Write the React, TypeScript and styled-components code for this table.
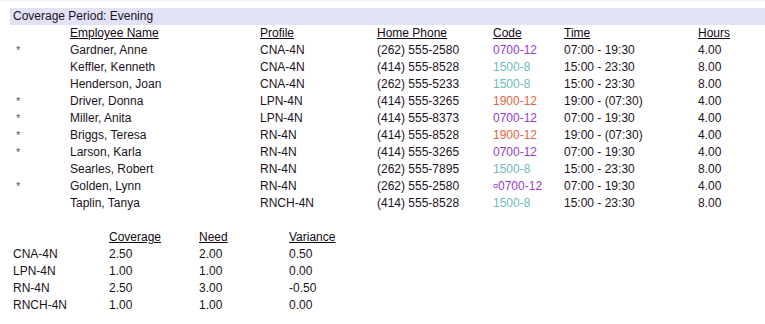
import styled, { createGlobalStyle } from 'styled-components'

const GlobalStyle = createGlobalStyle`
  html, body {
    margin: 0;
    padding: 0;
    background: #ffffff;
  }
  body {
    font-family: 'Liberation Sans', Arial, sans-serif;
    font-size: 12px;
    color: #1c121c;
  }
`

const TEXT_COLOR = '#1c121c'

const CODE_COLORS: Record<string, string> = {
  day: '#9a3ad0',
  evening: '#6bbcbc',
  night: '#e5653e',
}

type Shift = keyof typeof CODE_COLORS

interface Employee {
  starred: boolean
  name: string
  profile: string
  phone: string
  code: string
  shift: Shift
  marker?: boolean
  time: string
  hours: string
}

const employees: Employee[] = [
  { starred: true, name: 'Gardner, Anne', profile: 'CNA-4N', phone: '(262) 555-2580', code: '0700-12', shift: 'day', time: '07:00 - 19:30', hours: '4.00' },
  { starred: false, name: 'Keffler, Kenneth', profile: 'CNA-4N', phone: '(414) 555-8528', code: '1500-8', shift: 'evening', time: '15:00 - 23:30', hours: '8.00' },
  { starred: false, name: 'Henderson, Joan', profile: 'CNA-4N', phone: '(262) 555-5233', code: '1500-8', shift: 'evening', time: '15:00 - 23:30', hours: '8.00' },
  { starred: true, name: 'Driver, Donna', profile: 'LPN-4N', phone: '(414) 555-3265', code: '1900-12', shift: 'night', time: '19:00 - (07:30)', hours: '4.00' },
  { starred: true, name: 'Miller, Anita', profile: 'LPN-4N', phone: '(414) 555-8373', code: '0700-12', shift: 'day', time: '07:00 - 19:30', hours: '4.00' },
  { starred: true, name: 'Briggs, Teresa', profile: 'RN-4N', phone: '(414) 555-8528', code: '1900-12', shift: 'night', time: '19:00 - (07:30)', hours: '4.00' },
  { starred: true, name: 'Larson, Karla', profile: 'RN-4N', phone: '(414) 555-3265', code: '0700-12', shift: 'day', time: '07:00 - 19:30', hours: '4.00' },
  { starred: false, name: 'Searles, Robert', profile: 'RN-4N', phone: '(262) 555-7895', code: '1500-8', shift: 'evening', time: '15:00 - 23:30', hours: '8.00' },
  { starred: true, name: 'Golden, Lynn', profile: 'RN-4N', phone: '(262) 555-2580', code: '0700-12', shift: 'day', marker: true, time: '07:00 - 19:30', hours: '4.00' },
  { starred: false, name: 'Taplin, Tanya', profile: 'RNCH-4N', phone: '(414) 555-8528', code: '1500-8', shift: 'evening', time: '15:00 - 23:30', hours: '8.00' },
]

const summary = [
  { profile: 'CNA-4N', coverage: '2.50', need: '2.00', variance: '0.50' },
  { profile: 'LPN-4N', coverage: '1.00', need: '1.00', variance: '0.00' },
  { profile: 'RN-4N', coverage: '2.50', need: '3.00', variance: '-0.50' },
  { profile: 'RNCH-4N', coverage: '1.00', need: '1.00', variance: '0.00' },
]

const Page = styled.div`
  width: 765px;
  height: 324px;
  overflow: hidden;
  padding-top: 7px;
  box-sizing: border-box;
  border-top: 1px solid #efefef;
`

const PeriodBar = styled.div`
  margin-left: 10px;
  height: 17px;
  line-height: 17px;
  padding-left: 3px;
  background: #e2e2f6;
  color: ${TEXT_COLOR};
`

const ShiftRow = styled.div`
  display: grid;
  grid-template-columns: 54px 190px 117px 116px 71px 134px 1fr;
  padding-left: 16px;
  height: 17px;
  line-height: 17px;
  white-space: nowrap;
`

const SummaryTable = styled.div`
  margin-top: 17px;
`

const SummaryRow = styled.div`
  display: grid;
  grid-template-columns: 96px 90px 90px 1fr;
  padding-left: 13px;
  height: 17px;
  line-height: 17px;
  white-space: nowrap;
`

const Heading = styled.span`
  text-decoration: underline;
  color: #140814;
`

const Cell = styled.span`
  color: ${TEXT_COLOR};
`

const Star = styled.span`
  color: #555;
  font-size: 11px;
`

const Code = styled.span<{ $shift: Shift }>`
  color: ${({ $shift }) => CODE_COLORS[$shift]};
`

const Marker = styled.span`
  font-size: 9px;
  vertical-align: 1px;
`

const App = () => (
  <Page>
    <GlobalStyle />
    <PeriodBar>Coverage Period: Evening</PeriodBar>

    <ShiftRow>
      <span />
      <Heading>Employee Name</Heading>
      <Heading>Profile</Heading>
      <Heading>Home Phone</Heading>
      <Heading>Code</Heading>
      <Heading>Time</Heading>
      <Heading>Hours</Heading>
    </ShiftRow>

    {employees.map((e, i) => (
      <ShiftRow key={i}>
        <Star>{e.starred ? '*' : ''}</Star>
        <Cell>{e.name}</Cell>
        <Cell>{e.profile}</Cell>
        <Cell>{e.phone}</Cell>
        <Code $shift={e.shift}>
          {e.marker && <Marker>¤</Marker>}
          {e.code}
        </Code>
        <Cell>{e.time}</Cell>
        <Cell>{e.hours}</Cell>
      </ShiftRow>
    ))}

    <SummaryTable>
      <SummaryRow>
        <span />
        <Heading>Coverage</Heading>
        <Heading>Need</Heading>
        <Heading>Variance</Heading>
      </SummaryRow>
      {summary.map((s) => (
        <SummaryRow key={s.profile}>
          <Cell>{s.profile}</Cell>
          <Cell>{s.coverage}</Cell>
          <Cell>{s.need}</Cell>
          <Cell>{s.variance}</Cell>
        </SummaryRow>
      ))}
    </SummaryTable>
  </Page>
)

export default App
